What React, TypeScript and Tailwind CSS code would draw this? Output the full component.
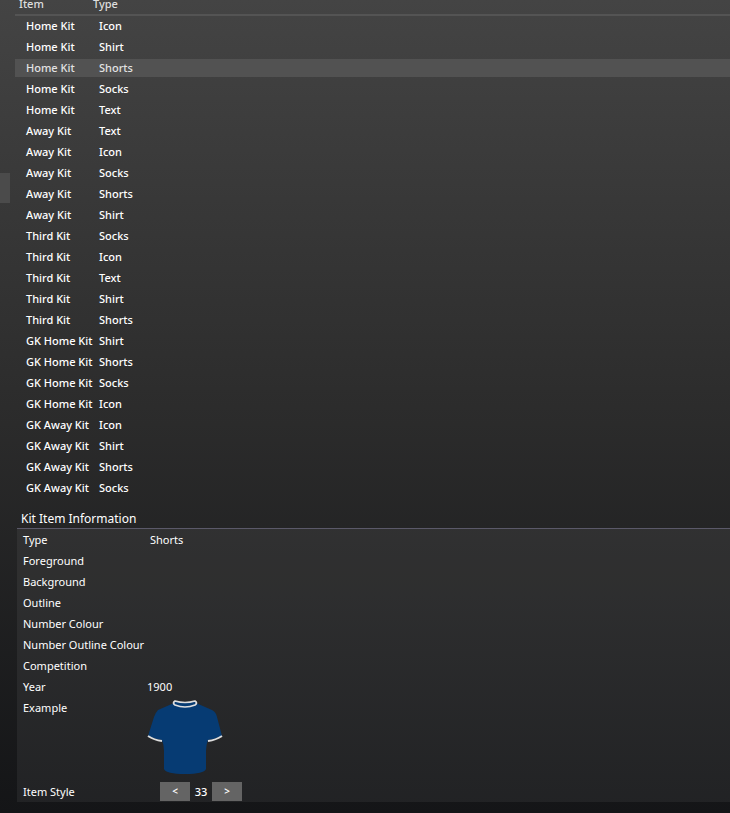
import React from "react";

type KitItem = { item: string; type: string };

const KIT_ITEMS: KitItem[] = [
  { item: "Home Kit", type: "Icon" },
  { item: "Home Kit", type: "Shirt" },
  { item: "Home Kit", type: "Shorts" },
  { item: "Home Kit", type: "Socks" },
  { item: "Home Kit", type: "Text" },
  { item: "Away Kit", type: "Text" },
  { item: "Away Kit", type: "Icon" },
  { item: "Away Kit", type: "Socks" },
  { item: "Away Kit", type: "Shorts" },
  { item: "Away Kit", type: "Shirt" },
  { item: "Third Kit", type: "Socks" },
  { item: "Third Kit", type: "Icon" },
  { item: "Third Kit", type: "Text" },
  { item: "Third Kit", type: "Shirt" },
  { item: "Third Kit", type: "Shorts" },
  { item: "GK Home Kit", type: "Shirt" },
  { item: "GK Home Kit", type: "Shorts" },
  { item: "GK Home Kit", type: "Socks" },
  { item: "GK Home Kit", type: "Icon" },
  { item: "GK Away Kit", type: "Icon" },
  { item: "GK Away Kit", type: "Shirt" },
  { item: "GK Away Kit", type: "Shorts" },
  { item: "GK Away Kit", type: "Socks" },
];

const SELECTED = 2;

const EMPTY_FIELDS = [
  "Foreground",
  "Background",
  "Outline",
  "Number Colour",
  "Number Outline Colour",
  "Competition",
];

function ShirtPreview() {
  return (
    <svg width="76" height="76" viewBox="0 0 76 76" role="img" aria-label="Blue shirt">
      <path
        d="M27 4 Q38 8 49 4 L65 11 Q69 13 70 18 L75 37 Q68 40 61 41 Q59 46 59 52 V70 Q57 75 38 75 Q19 75 17 70 V52 Q17 46 15 41 Q8 40 1 37 L7 18 Q9 13 11 11 Z"
        fill="#063b73"
      />
      <path d="M1 37 Q7 41 15 42 M61 42 Q69 41 75 37" fill="none" stroke="#dedede" strokeWidth="2" />
      <path
        d="M28 2 Q38 5 48 2 Q51 4 48 6 Q38 10 28 6 Q25 4 28 2 Z"
        fill="#063b73"
        stroke="#dedede"
        strokeWidth="1.7"
        strokeLinejoin="round"
      />
    </svg>
  );
}

function KitTable() {
  return (
    <table className="w-full table-fixed border-separate border-spacing-0 text-left">
      <colgroup>
        <col className="w-[77px]" />
        <col />
      </colgroup>
      <thead>
        <tr className="h-4 leading-[8px] text-[#dedede]">
          <th className="border-b-2 border-[#545454] p-0 pb-1.5 pl-1 font-medium">Item</th>
          <th className="border-b-2 border-[#545454] p-0 pb-1.5 pl-px font-medium">Type</th>
        </tr>
      </thead>
      <tbody>
        {KIT_ITEMS.map((kit, index) => (
          <tr
            key={index}
            aria-selected={index === SELECTED}
            className={index === SELECTED ? "h-[21px] text-[#e2e2e2]" : "h-[21px] text-white"}
          >
            <td
              className={
                index === SELECTED
                  ? "border-t border-b-2 border-transparent bg-[#525252] bg-clip-padding p-0 pl-[11px] whitespace-nowrap"
                  : "border-t border-b-2 border-transparent p-0 pl-[11px] whitespace-nowrap"
              }
            >
              {kit.item}
            </td>
            <td
              className={
                index === SELECTED
                  ? "border-t border-b-2 border-transparent bg-[#525252] bg-clip-padding p-0 pl-[7px]"
                  : "border-t border-b-2 border-transparent p-0 pl-[7px]"
              }
            >
              {kit.type}
            </td>
          </tr>
        ))}
      </tbody>
    </table>
  );
}

function KitInformation() {
  const [style, setStyle] = React.useState(33);
  return (
    <section className="ml-0.5 font-normal">
      <h2 className="flex h-[30px] items-end border-b border-[#5b5969] pb-px pl-1 text-[12px] leading-[16px] font-normal text-white">
        Kit Item Information
      </h2>
      <dl className="grid grid-cols-[124px_1fr] auto-rows-[minmax(21px,auto)] bg-white/6 pl-1.5 leading-[21px] text-white">
        <dt>Type</dt>
        <dd className="pl-[3px]">Shorts</dd>
        {EMPTY_FIELDS.map((field) => (
          <React.Fragment key={field}>
            <dt className="whitespace-nowrap">{field}</dt>
            <dd />
          </React.Fragment>
        ))}
        <dt>Year</dt>
        <dd>1900</dd>
        <dt>Example</dt>
        <dd className="flex h-[84px] items-start pt-0.5">
          <ShirtPreview />
        </dd>
        <dt>Item Style</dt>
        <dd className="flex items-center pl-[13px]">
          <button
            type="button"
            aria-label="Previous style"
            onClick={() => setStyle(style - 1)}
            className="h-[19px] w-[30px] bg-[#646464] text-[10px] leading-[19px] font-semibold text-white"
          >
            &lt;
          </button>
          <output className="w-[22px] text-center font-medium">{style}</output>
          <button
            type="button"
            aria-label="Next style"
            onClick={() => setStyle(style + 1)}
            className="h-[19px] w-[30px] bg-[#646464] text-[10px] leading-[19px] font-semibold text-white"
          >
            &gt;
          </button>
        </dd>
      </dl>
    </section>
  );
}

export default function App() {
  return (
    <div className="flex min-h-screen overflow-hidden bg-linear-to-b from-[#444444] via-[#2c2c2c] to-[#141517] font-['Noto_Sans',sans-serif] text-[11px] leading-[18px] font-medium">
      <aside className="w-[15px] shrink-0 pt-[173px]">
        <button type="button" aria-label="Toggle side panel" className="block h-[30px] w-2.5 bg-[#4b4b4b]" />
      </aside>
      <main className="min-w-0 flex-1">
        <KitTable />
        <KitInformation />
      </main>
    </div>
  );
}
